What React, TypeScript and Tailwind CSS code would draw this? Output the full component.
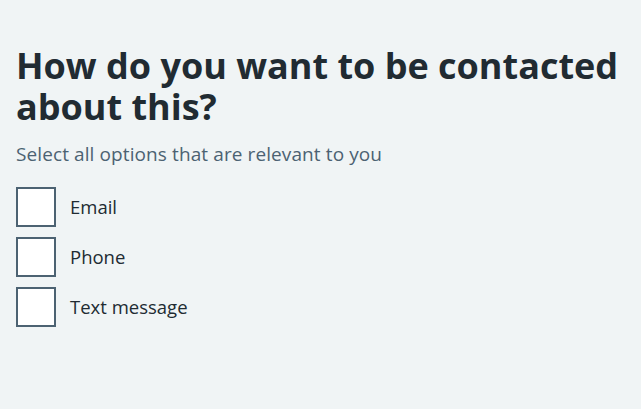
import { useState } from "react";

const options = ["Email", "Phone", "Text message"];

export default function App() {
  const [checked, setChecked] = useState<string[]>([]);

  const toggle = (o: string) =>
    setChecked((c) => (c.includes(o) ? c.filter((x) => x !== o) : [...c, o]));

  return (
    <div
      className="min-h-[409px] bg-[#f0f4f5] px-4 pt-[45px] text-[#212b32]"
      style={{ fontFamily: '"Open Sans", Arial, sans-serif' }}
    >
      <h1 className="text-[36px] font-bold leading-[41px]">
        How do you want to be contacted about this?
      </h1>
      <p className="mt-[15px] text-[19px] leading-6 text-[#4c6272] tracking-[0.1px]">
        Select all options that are relevant to you
      </p>
      <div className="mt-[21px] flex flex-col gap-[10px]">
        {options.map((o) => (
          <label key={o} className="flex cursor-pointer items-center gap-[14px]">
            <span
              onClick={() => toggle(o)}
              className="flex h-10 w-10 items-center justify-center border-2 border-[#4c6272] bg-white"
            >
              {checked.includes(o) && (
                <svg width="24" height="24" viewBox="0 0 24 24" fill="none">
                  <path d="M5 12l5 5 9-10" stroke="#212b32" strokeWidth="3" />
                </svg>
              )}
            </span>
            <span className="text-[18.5px] leading-6">{o}</span>
          </label>
        ))}
      </div>
    </div>
  );
}
